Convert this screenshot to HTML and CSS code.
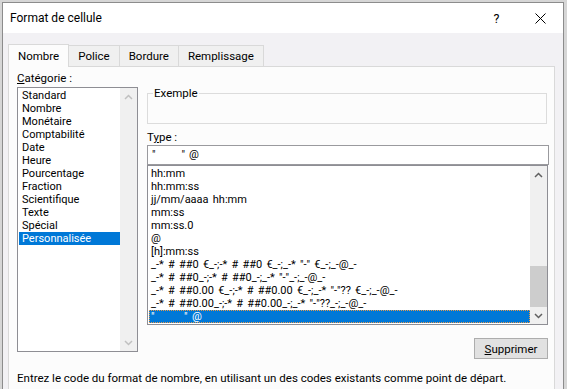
FILE: index.html
```html
<!DOCTYPE html>
<html lang="fr">
<head>
    <meta charset="UTF-8">
    <title>Format de cellule</title>
    <link rel="stylesheet" href="styles.css">
</head>
<body>

<div class="dialog">

    <!-- Barre de titre -->
    <div class="titlebar">
        <span class="title">Format de cellule</span>
        <span class="title-button help">?</span>
        <span class="title-button">
            <svg width="11" height="11" viewBox="0 0 11 11"><path d="M0.5 0.5 L10.5 10.5 M10.5 0.5 L0.5 10.5" stroke="#000" stroke-width="1" fill="none"/></svg>
        </span>
    </div>

    <!-- Onglets -->
    <div class="tabs">
        <div class="tab active">Nombre</div>
        <div class="tab">Police</div>
        <div class="tab">Bordure</div>
        <div class="tab">Remplissage</div>
    </div>

    <div class="panel">
        <div class="main">

            <!-- Catégories -->
            <div class="category">
                <div class="label"><u>C</u>atégorie :</div>
                <div class="listbox category-list">
                    <ul class="items">
                        <li>Standard</li>
                        <li>Nombre</li>
                        <li>Monétaire</li>
                        <li>Comptabilité</li>
                        <li>Date</li>
                        <li>Heure</li>
                        <li>Pourcentage</li>
                        <li>Fraction</li>
                        <li>Scientifique</li>
                        <li>Texte</li>
                        <li>Spécial</li>
                        <li class="selected">Personnalisée</li>
                    </ul>
                    <div class="scrollbar disabled">
                        <span class="arrow"><svg width="9" height="6" viewBox="0 0 9 6"><path d="M1 5 L4.5 1.5 L8 5" fill="none" stroke-width="1.5"/></svg></span>
                        <span class="track"></span>
                        <span class="arrow"><svg width="9" height="6" viewBox="0 0 9 6"><path d="M1 1 L4.5 4.5 L8 1" fill="none" stroke-width="1.5"/></svg></span>
                    </div>
                </div>
            </div>

            <!-- Détails du format -->
            <div class="details">
                <fieldset class="sample">
                    <legend>Exemple</legend>
                    <div class="sample-value"></div>
                </fieldset>

                <div class="label">T<u>y</u>pe :</div>
                <div class="type-input">"&nbsp;&nbsp;&nbsp;&nbsp;&nbsp;&nbsp;&nbsp;" @</div>

                <div class="listbox type-list">
                    <ul class="items">
                        <li>hh:mm</li>
                        <li>hh:mm:ss</li>
                        <li>jj/mm/aaaa hh:mm</li>
                        <li>mm:ss</li>
                        <li>mm:ss.0</li>
                        <li>@</li>
                        <li>[h]:mm:ss</li>
                        <li>_-* # ##0 €_-;-* # ##0 €_-;_-* "-" €_-;_-@_-</li>
                        <li>_-* # ##0_-;-* # ##0_-;_-* "-"_-;_-@_-</li>
                        <li>_-* # ##0.00 €_-;-* # ##0.00 €_-;_-* "-"?? €_-;_-@_-</li>
                        <li>_-* # ##0.00_-;-* # ##0.00_-;_-* "-"??_-;_-@_-</li>
                        <li class="selected focused">"&nbsp;&nbsp;&nbsp;&nbsp;&nbsp;&nbsp;&nbsp;" @</li>
                    </ul>
                    <div class="scrollbar">
                        <span class="arrow"><svg width="9" height="6" viewBox="0 0 9 6"><path d="M1 5 L4.5 1.5 L8 5" fill="none" stroke-width="1.5"/></svg></span>
                        <span class="track"><span class="thumb"></span></span>
                        <span class="arrow"><svg width="9" height="6" viewBox="0 0 9 6"><path d="M1 1 L4.5 4.5 L8 1" fill="none" stroke-width="1.5"/></svg></span>
                    </div>
                </div>

                <div class="actions">
                    <button><u>S</u>upprimer</button>
                </div>
            </div>
        </div>

        <p class="hint">Entrez le code du format de nombre, en utilisant un des codes existants comme point de départ.</p>
    </div>

</div>

</body>
</html>
```

FILE: styles.css
```css
body {
    margin: 0;
    padding: 0;
    background-color: #d6d6d6;
    font-family: Roboto, "Open Sans", sans-serif;
    font-size: 11.5px;
    color: #000;
    overflow: hidden;
}

.dialog {
    margin: 2px 3px 0 2px;
    height: 400px;
    border: 1px solid #8c8c8c;
    background-color: #f2f1f4;
}

/* Barre de titre */

.titlebar {
    display: flex;
    align-items: center;
    height: 30px;
    background: #fff;
    padding-left: 7px;
}

.title {
    flex: 1;
    font-size: 12px;
}

.title-button {
    display: flex;
    align-items: center;
    justify-content: center;
    width: 46px;
    height: 30px;
    font-size: 12.5px;
}

.title-button.help {
    width: 41px;
}

/* Onglets */

.tabs {
    display: flex;
    align-items: flex-end;
    margin-top: 11px;
    padding-left: 5px;
}

.tab {
    height: 20px;
    line-height: 20px;
    padding: 0 9px;
    border: 1px solid #d9d9d9;
    border-bottom: none;
    background: #f0f0f0;
    margin-left: -1px;
}

.tab.active {
    position: relative;
    height: 22px;
    line-height: 23px;
    margin-left: 0;
    margin-bottom: -1px;
    padding: 0 9px;
    background: #fcfcfc;
}

.panel {
    margin: 0 8px 0 5px;
    height: 340px;
    border: 1px solid #d9d9d9;
    background: #fcfcfc;
    padding: 0 5px 0 8px;
}

.main {
    display: flex;
    gap: 9px;
}

.label {
    line-height: 15px;
}

.label u, .actions u {
    text-underline-offset: 1px;
}

/* Catégories */

.category {
    width: 122px;
    padding-top: 4px;
}

.category .label {
    margin-bottom: 1px;
}

.listbox {
    display: flex;
    border: 1px solid #8e8e94;
    background: #fff;
}

.items {
    flex: 1;
    list-style: none;
    margin: 0;
    padding: 1px 0 0 1px;
    overflow: hidden;
    font-size: 11px;
}

.items li {
    height: 13px;
    line-height: 13px;
    padding-left: 2px;
    white-space: nowrap;
}

.items li.selected {
    background: #0078d7;
    color: #fff;
}

.items li.focused {
    outline: 1px dotted #e89a4a;
    outline-offset: -1px;
}

.category-list {
    height: 263px;
}

.category-list .items li {
    padding-left: 3px;
}

.scrollbar {
    display: flex;
    flex-direction: column;
    width: 17px;
    background: #f0f0f0;
}

.scrollbar .arrow {
    display: flex;
    align-items: center;
    justify-content: center;
    height: 17px;
}

.scrollbar path {
    stroke: #606060;
}

.scrollbar.disabled path {
    stroke: #c0c0c0;
}

.track {
    flex: 1;
    display: flex;
    flex-direction: column;
    justify-content: flex-end;
}

.thumb {
    height: 41px;
    background: #cdcdcd;
}

/* Détails */

.details {
    width: 402px;
}

.sample {
    margin: 19px 2px 0 0;
    padding: 0;
    border: 1px solid #dcdcdc;
}

.sample legend {
    margin-left: 5px;
    padding: 0 1px;
    line-height: 14px;
}

.sample-value {
    height: 23px;
}

.details .label {
    margin-top: 6px;
}

.type-input {
    width: 396px;
    height: 18px;
    line-height: 18px;
    padding-left: 4px;
    border: 1px solid #9a9a9e;
    background: #fff;
    white-space: nowrap;
    font-size: 11px;
    word-spacing: 1px;
}

.type-list {
    width: 399px;
    height: 158px;
}

.type-list .items {
    padding-top: 1px;
    word-spacing: 1.5px;
}

.actions {
    display: flex;
    justify-content: flex-end;
    margin: 13px 1px 0 0;
}

.actions button {
    width: 74px;
    height: 21px;
    padding: 0;
    font-family: inherit;
    font-size: 11.5px;
    color: #000;
    background: #e1e1e1;
    border: 1px solid #adadad;
}

.hint {
    margin: 12px 0 0;
    line-height: 15px;
    white-space: nowrap;
}
```
